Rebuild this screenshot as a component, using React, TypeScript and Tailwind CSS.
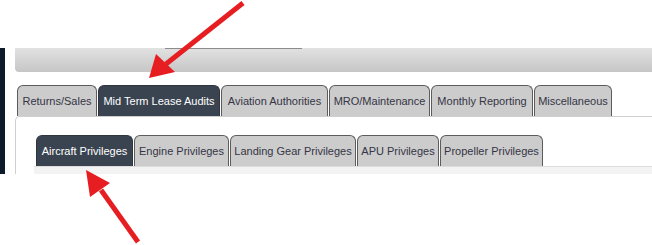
const mainTabs = [
  { label: 'Returns/Sales', w: 'w-[80px]' },
  { label: 'Mid Term Lease Audits', w: 'w-[122px]', active: true },
  { label: 'Aviation Authorities', w: 'w-[107px]' },
  { label: 'MRO/Maintenance', w: 'w-[101px]' },
  { label: 'Monthly Reporting', w: 'w-[102px]' },
  { label: 'Miscellaneous', w: 'w-[78px]' },
];

const subTabs = [
  { label: 'Aircraft Privileges', w: 'w-[97px]', active: true },
  { label: 'Engine Privileges', w: 'w-[95px]' },
  { label: 'Landing Gear Privileges', w: 'w-[126px]' },
  { label: 'APU Privileges', w: 'w-[82px]' },
  { label: 'Propeller Privileges', w: 'w-[103px]' },
];

type TabProps = { label: string; w: string; active?: boolean };

const Tab = ({ label, w, active }: TabProps) => (
  <div
    className={`${w} h-[31px] shrink-0 flex items-center justify-center rounded-t-[6px] border border-b-0 whitespace-nowrap text-[11px] ${
      active ? 'bg-[#3a4451] border-[#2e3640] text-white' : 'bg-[#cccccc] border-[#5c5c5c] text-[#353545]'
    }`}
  >
    {label}
  </div>
);

export default function App() {
  return (
    <div className="relative w-[652px] h-[245px] bg-white overflow-hidden font-['Liberation_Sans',Arial,sans-serif]">
      <div className="flex pt-[48px]">
        {/* left nav edge */}
        <div className="w-[5px] h-[126px] bg-[#0e1a29] shrink-0" />
        <div className="ml-[10px] flex-1 flex flex-col">
          {/* toolbar strip */}
          <div className="h-[24px] rounded-bl-[4px] bg-gradient-to-b from-[#e2e2e2] to-[#c6c6c6]">
            <div className="ml-[150px] w-[137px] h-px bg-[#8c8c8c]" />
          </div>

          <div className="mt-[13px] pl-[2px] flex gap-px">
            {mainTabs.map((t) => (
              <Tab key={t.label} {...t} />
            ))}
          </div>

          <div className="h-[58px] border-l border-t border-[#cfcfcf] rounded-tl-[5px]">
            <div className="pt-[18px] pl-[20px] flex gap-px">
              {subTabs.map((t) => (
                <Tab key={t.label} {...t} />
              ))}
            </div>
            <div className="ml-[18px] h-[8px] bg-[#f3f3f3] border-t border-[#dcdcdc]" />
          </div>
        </div>
      </div>

      {/* annotation arrows */}
      <svg className="absolute inset-0 pointer-events-none" width="652" height="245" viewBox="0 0 652 245">
        <line x1="243" y1="3" x2="166" y2="64" stroke="#e61e22" strokeWidth="5" />
        <polygon points="149,78 175,72 156,54" fill="#e61e22" />
        <line x1="138" y1="242" x2="101" y2="190" stroke="#e61e22" strokeWidth="5" />
        <polygon points="86,170 110,183 90,197" fill="#e61e22" />
      </svg>
    </div>
  );
}
